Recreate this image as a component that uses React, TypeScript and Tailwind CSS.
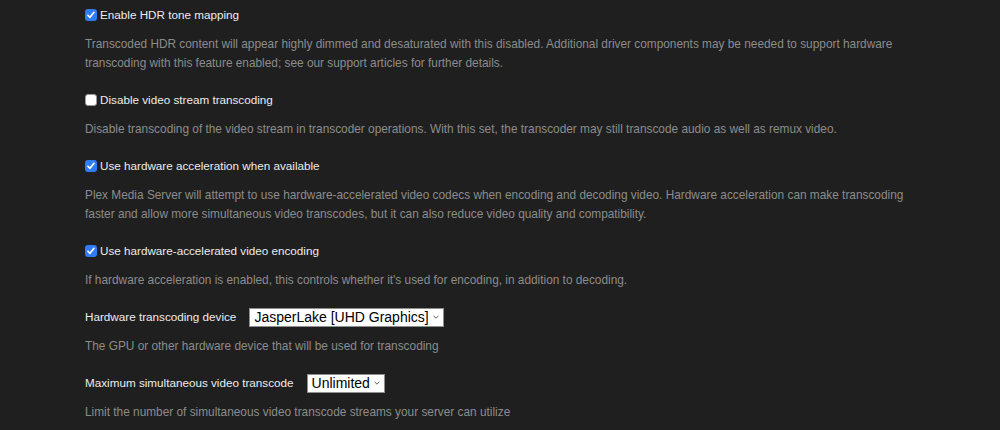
import React from 'react';

interface CheckSetting {
  label: string;
  checked: boolean;
  description: string;
}

interface SelectSetting {
  label: string;
  value: string;
  description: string;
}

const checkSettings: CheckSetting[] = [
  {
    label: 'Enable HDR tone mapping',
    checked: true,
    description:
      'Transcoded HDR content will appear highly dimmed and desaturated with this disabled. Additional driver components may be needed to support hardware transcoding with this feature enabled; see our support articles for further details.',
  },
  {
    label: 'Disable video stream transcoding',
    checked: false,
    description:
      'Disable transcoding of the video stream in transcoder operations. With this set, the transcoder may still transcode audio as well as remux video.',
  },
  {
    label: 'Use hardware acceleration when available',
    checked: true,
    description:
      'Plex Media Server will attempt to use hardware-accelerated video codecs when encoding and decoding video. Hardware acceleration can make transcoding faster and allow more simultaneous video transcodes, but it can also reduce video quality and compatibility.',
  },
  {
    label: 'Use hardware-accelerated video encoding',
    checked: true,
    description:
      "If hardware acceleration is enabled, this controls whether it's used for encoding, in addition to decoding.",
  },
];

const selectSettings: SelectSetting[] = [
  {
    label: 'Hardware transcoding device',
    value: 'JasperLake [UHD Graphics]',
    description: 'The GPU or other hardware device that will be used for transcoding',
  },
  {
    label: 'Maximum simultaneous video transcode',
    value: 'Unlimited',
    description: 'Limit the number of simultaneous video transcode streams your server can utilize',
  },
];

const Checkbox = ({ checked }: { checked: boolean }) =>
  checked ? (
    <span className="w-[12px] h-[12px] rounded-[3px] bg-[#2f7cf6] flex items-center justify-center shrink-0">
      <svg viewBox="0 0 12 12" className="w-[10px] h-[10px]" fill="none">
        <path d="M2.3 6.3L4.8 8.8L9.6 2.8" stroke="#fff" strokeWidth="2" strokeLinecap="round" strokeLinejoin="round" />
      </svg>
    </span>
  ) : (
    <span className="w-[12px] h-[12px] rounded-[3px] bg-white border border-[#9a9a9a] shrink-0" />
  );

const FakeSelect = ({ value }: { value: string }) => (
  <div className="h-[19px] bg-white border border-[#8e8e8e] flex items-center pl-[4px] pr-[4px] gap-[4px] text-black text-[14px] leading-none">
    <span>{value}</span>
    <svg viewBox="0 0 10 6" className="w-[6px] h-[4px]" fill="none">
      <path d="M1 1L5 5L9 1" stroke="#333" strokeWidth="1.3" />
    </svg>
  </div>
);

const App: React.FC = () => {
  return (
    <div className="w-[1000px] h-[430px] overflow-hidden bg-[#1f1f1f] font-['Liberation_Sans',Arial,sans-serif]">
      <div className="pl-[85px] pt-[5px] w-[925px] flex flex-col gap-[17.5px]">
        {checkSettings.map((s) => (
          <div key={s.label}>
            <div className="h-[20px] flex items-center gap-[3px]">
              <Checkbox checked={s.checked} />
              <span className="text-[11.7px] text-[#ececec]">{s.label}</span>
            </div>
            <p className="mt-[9.5px] text-[11.85px] leading-[19px] text-[#8c8c8c]">{s.description}</p>
          </div>
        ))}
        {selectSettings.map((s) => (
          <div key={s.label}>
            <div className="h-[20px] flex items-center gap-[13px]">
              <span className="text-[11.7px] text-[#ececec]">{s.label}</span>
              <FakeSelect value={s.value} />
            </div>
            <p className="mt-[9.5px] text-[11.85px] leading-[19px] text-[#8c8c8c]">{s.description}</p>
          </div>
        ))}
      </div>
    </div>
  );
};

export default App;
